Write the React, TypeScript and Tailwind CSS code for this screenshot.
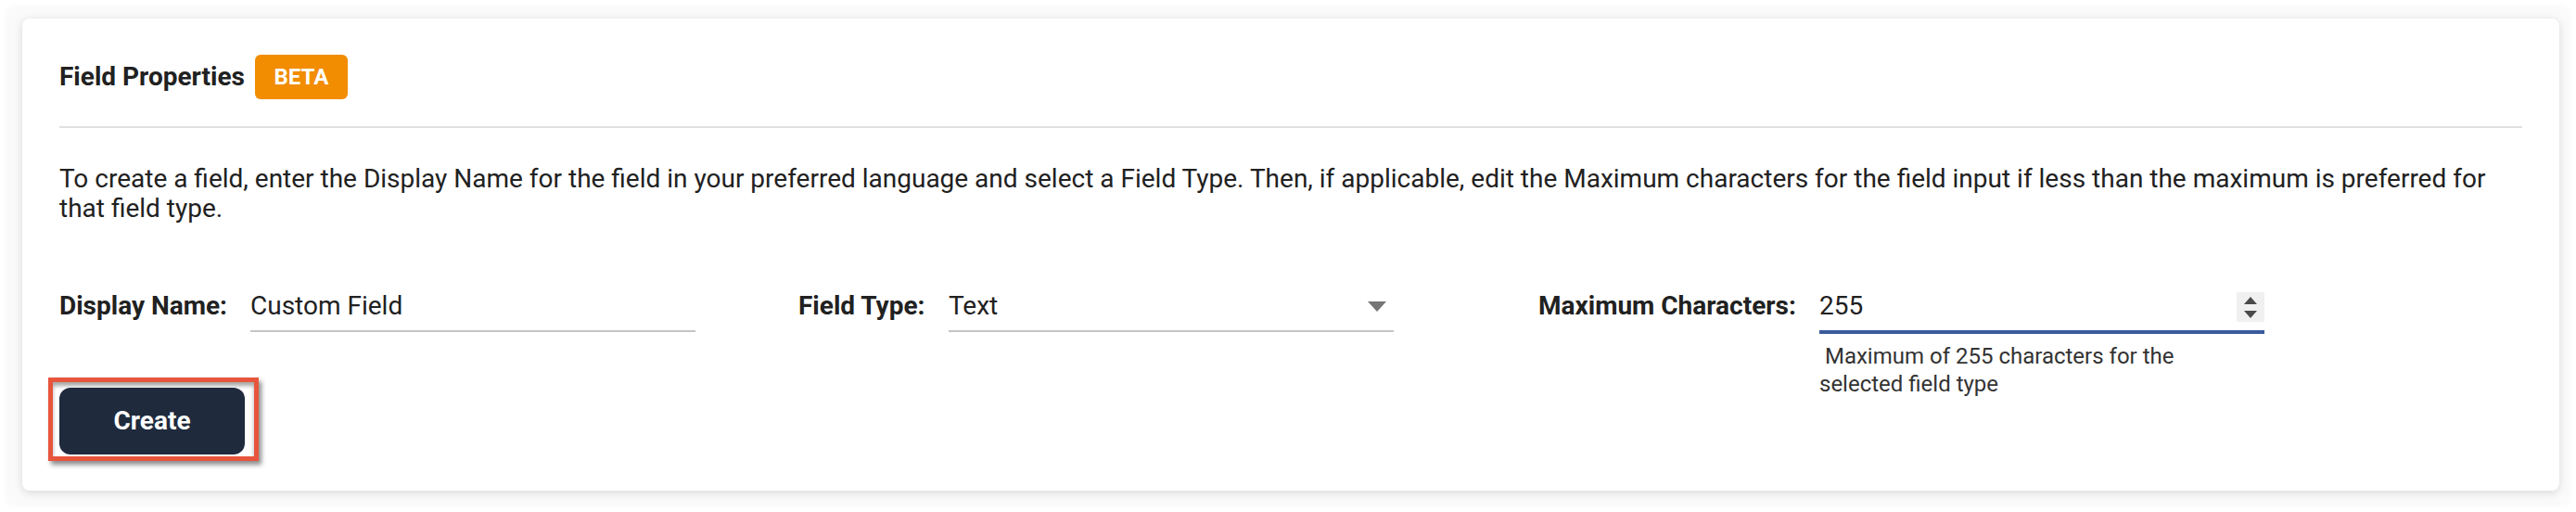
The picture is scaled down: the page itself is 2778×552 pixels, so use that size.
import type { ReactNode } from 'react';

function FieldLabel({ width, children }: { width: string; children: ReactNode }) {
  return <span className={`${width} shrink-0 text-[28px] font-bold leading-[32px]`}>{children}</span>;
}

function SelectArrow() {
  return (
    <svg width="20" height="11" viewBox="0 0 20 11" className="shrink-0">
      <polygon points="0,0 20,0 10,11" fill="#757575" />
    </svg>
  );
}

function Spinner() {
  return (
    <div className="flex h-[32px] w-[30px] flex-col items-center justify-center gap-[7px] bg-[#f0f0f0]">
      <svg width="14" height="8" viewBox="0 0 14 8">
        <polygon points="7,0 14,8 0,8" fill="#4a4a4a" />
      </svg>
      <svg width="14" height="8" viewBox="0 0 14 8">
        <polygon points="0,0 14,0 7,8" fill="#4a4a4a" />
      </svg>
    </div>
  );
}

export default function App() {
  return (
    <div className="h-[552px] w-[2778px] bg-white pl-[10px] pt-[9px] font-['Roboto',sans-serif] text-[#212121]">
      <div className="h-[533px] w-[2758px] bg-[#fafafa] pl-[14px] pt-[11px] shadow-[0_0_10px_rgba(0,0,0,0.05)]">
        <section className="h-[509px] w-[2736px] rounded-lg bg-white px-[40px] pt-[39px] shadow-[0_2px_10px_rgba(0,0,0,0.14)]">
          <div className="flex h-[48px] items-center">
            <h2 className="text-[28px] font-bold leading-[32px]">Field Properties</h2>
            <span className="ml-[11px] flex h-[48px] w-[100px] items-center justify-center rounded-[6px] bg-[#f28c00] text-[24px] font-bold text-white">
              BETA
            </span>
          </div>

          <div className="mt-[29px] h-[2px] bg-[#e0e0e0]" />

          <p className="mt-[39px] text-[28px] leading-[32px]">
            To create a field, enter the Display Name for the field in your preferred language and select a Field
            Type. Then, if applicable, edit the Maximum characters for the field input if less than the maximum is
            preferred for that field type.
          </p>

          <div className="mt-[73px] grid grid-cols-[797px_798px_1fr] items-start">
            <div className="flex flex-col items-start">
              <div className="flex items-start">
                <FieldLabel width="w-[206px]">Display Name:</FieldLabel>
                <div className="w-[480px] border-b-2 border-[#c4c4c4] pb-[10px] text-[28px] leading-[32px]">
                  Custom Field
                </div>
              </div>
              <div className="-ml-[12px] mt-[49px] border-[5px] border-[#e8553d] pb-[2px] pl-[7px] pr-[10px] pt-[6px] shadow-[3px_4px_5px_rgba(0,0,0,0.45),inset_0_4px_4px_rgba(0,0,0,0.35)]">
                <button
                  type="button"
                  className="flex h-[72px] w-[200px] items-center justify-center rounded-[12px] bg-[#1f2a3d] text-[28px] font-bold text-white"
                >
                  Create
                </button>
              </div>
            </div>

            <div className="flex items-start">
              <FieldLabel width="w-[162px]">Field Type:</FieldLabel>
              <div className="flex w-[480px] items-center justify-between border-b-2 border-[#c4c4c4] pb-[10px] pr-[8px] text-[28px] leading-[32px]">
                <span>Text</span>
                <SelectArrow />
              </div>
            </div>

            <div className="flex items-start">
              <FieldLabel width="w-[303px]">Maximum Characters:</FieldLabel>
              <div className="flex flex-col">
                <div className="flex w-[480px] items-start justify-between border-b-4 border-[#3a5a9c] pb-[9px] text-[28px] leading-[32px]">
                  <span>255</span>
                  <div className="pt-[1px]">
                    <Spinner />
                  </div>
                </div>
                <p className="mt-[9px] w-[400px] text-[24px] leading-[30px] text-[#333333]">
                  {'\u00a0'}Maximum of 255 characters for the selected field type
                </p>
              </div>
            </div>
          </div>
        </section>
      </div>
    </div>
  );
}
